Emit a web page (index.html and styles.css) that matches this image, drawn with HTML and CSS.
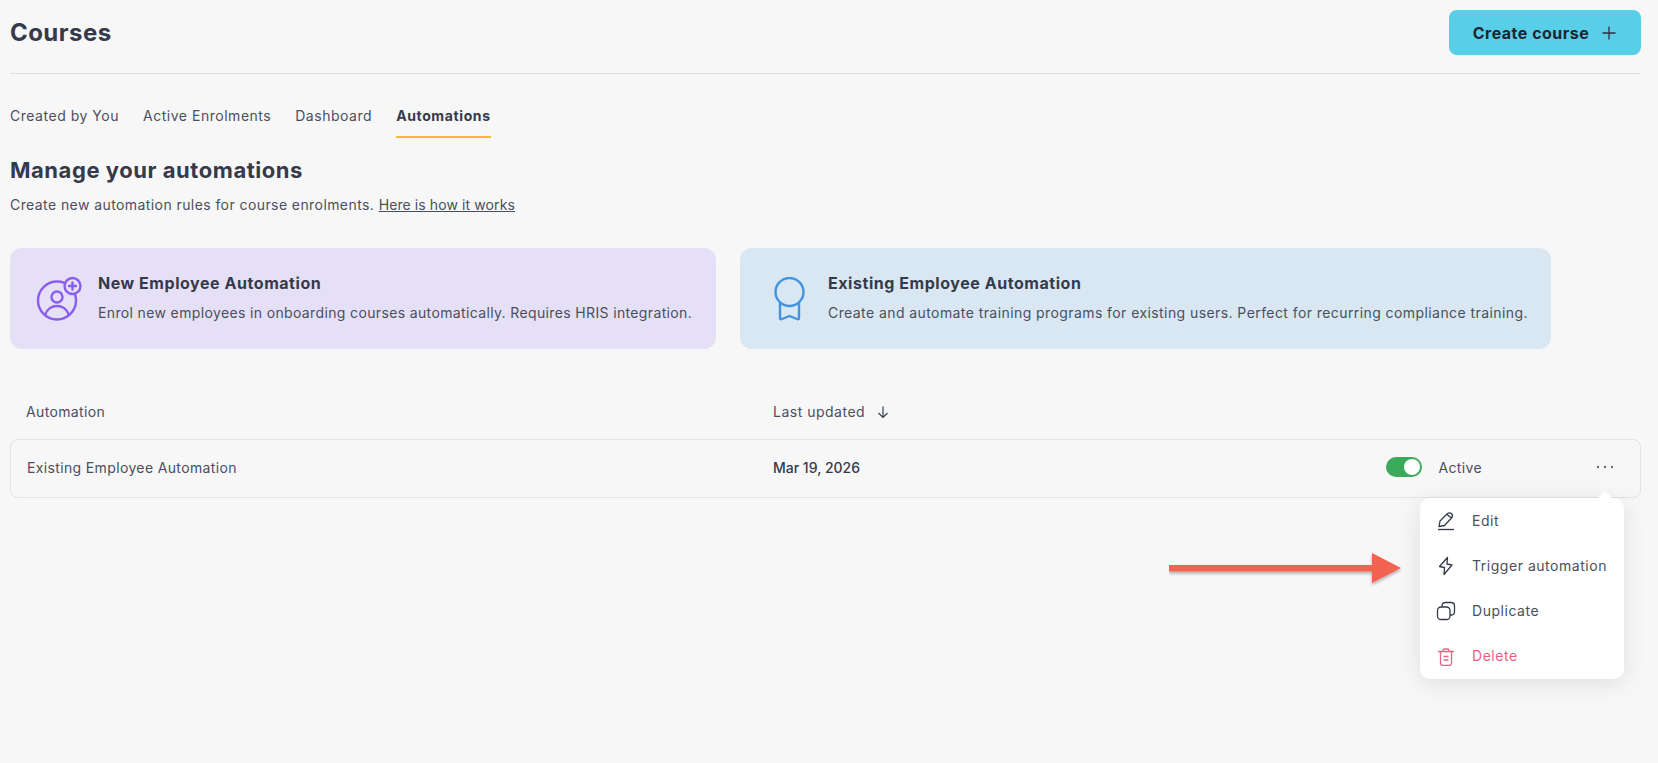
FILE: index.html
```html
<!DOCTYPE html>
<html>
<head>
  <title>Courses</title>
  <link rel="stylesheet" href="styles.css">
</head>
<body>

<header class="topbar">
  <h1>Courses</h1>
  <button class="create-btn">Create course
    <svg width="16" height="16" viewBox="0 0 16 16"><path d="M8 1.500v13M1.500 8h13" fill="none" stroke="#2b3040" stroke-width="1.300"/></svg>
  </button>
</header>

<nav class="tabs">
  <a class="tab">Created by You</a>
  <a class="tab">Active Enrolments</a>
  <a class="tab">Dashboard</a>
  <a class="tab active">Automations</a>
</nav>

<h2>Manage your automations</h2>
<p class="intro">Create new automation rules for course enrolments. <a class="link">Here is how it works</a></p>

<div class="cards">
  <div class="card card-new">
    <div class="card-icon">
      <svg width="46" height="46" viewBox="0 0 46 46" fill="none" stroke="#8b5cf0" stroke-width="2.400" stroke-linecap="round">
        <circle cx="21" cy="24.500" r="19"/>
        <circle cx="21" cy="21" r="5.500"/>
        <path d="M9 39c2-6 7-9 12-9s10 3 12 9"/>
        <circle cx="36.500" cy="10" r="8" fill="#e5e0f5"/>
        <path d="M36.500 6.500v7M33 10h7"/>
      </svg>
    </div>
    <div>
      <div class="card-title">New Employee Automation</div>
      <div class="card-text">Enrol new employees in onboarding courses automatically. Requires HRIS integration.</div>
    </div>
  </div>
  <div class="card card-existing">
    <div class="card-icon">
      <svg width="31" height="44" viewBox="0 0 31 44" fill="none" stroke="#4394e0" stroke-width="2.400" stroke-linecap="round" stroke-linejoin="round">
        <circle cx="15.500" cy="15" r="14"/>
        <path d="M6 26v15q0 2 2 1l7.500-3 7.500 3q2 1 2-1V26"/>
      </svg>
    </div>
    <div>
      <div class="card-title">Existing Employee Automation</div>
      <div class="card-text">Create and automate training programs for existing users. Perfect for recurring compliance training.</div>
    </div>
  </div>
</div>

<div class="table-head">
  <div>Automation</div>
  <div class="sort">Last updated
    <svg width="14" height="14" viewBox="0 0 14 14"><path d="M7 1.500v11M2.500 8l4.500 4.500L11.500 8" fill="none" stroke="#3a3f50" stroke-width="1.200"/></svg>
  </div>
</div>

<div class="table-row">
  <div>Existing Employee Automation</div>
  <div class="date">Mar 19, 2026</div>
  <div class="status">
    <span class="toggle"><span class="knob"></span></span>
    <span>Active</span>
  </div>
  <div class="dots">
    <svg width="18" height="4" viewBox="0 0 18 4" fill="#6b6f7c"><circle cx="2" cy="2" r="1.200"/><circle cx="9" cy="2" r="1.200"/><circle cx="16" cy="2" r="1.200"/></svg>
  </div>
</div>

<!-- open row menu -->
<div class="menu">
  <div class="menu-item">
    <svg width="20" height="20" viewBox="0 0 20 20" fill="none" stroke="#353a4b" stroke-width="1.300" stroke-linejoin="round"><path d="M3 15.500L4 10l7-7q2.500-2 4.500-.5 2 2 0 4.500l-7 7.500zM11 3.500l4.500 3.500"/><path d="M2 18.500h16"/></svg>
    Edit
  </div>
  <div class="menu-item">
    <svg width="20" height="20" viewBox="0 0 20 20" fill="none" stroke="#353a4b" stroke-width="1.300" stroke-linejoin="round"><path d="M11.500 1.500l-8 9 5 1-.5 7 8-9.500-5-1z"/></svg>
    Trigger automation
  </div>
  <div class="menu-item">
    <svg width="20" height="20" viewBox="0 0 20 20" fill="none" stroke="#353a4b" stroke-width="1.300"><rect x="1.500" y="6" width="12.500" height="12.500" rx="3.500"/><path d="M6 6V5q0-3.500 3.500-3.500H15q3.500 0 3.500 3.500v5.500q0 3.500-3.500 3.500h-1"/></svg>
    Duplicate
  </div>
  <div class="menu-item delete">
    <svg width="20" height="20" viewBox="0 0 20 20" fill="none" stroke="#ee5f86" stroke-width="1.300" stroke-linecap="round"><path d="M2.500 5.500h15M7 5.500V4.500Q7 3 8.500 3h3Q13 3 13 4.500v1M4.500 5.500V17q0 2.500 2.500 2.500h6q2.500 0 2.500-2.500V5.500M8 10.500h4M8 14h4"/></svg>
    Delete
  </div>
</div>

<svg class="arrow" width="240" height="40" viewBox="0 0 240 40">
  <defs><filter id="sh"><feDropShadow dx="0" dy="2" stdDeviation="1.500" flood-color="#000" flood-opacity=".3"/></filter></defs>
  <path d="M0 15h203V3l29 15-29 15V21.500H0z" fill="#f36351" filter="url(#sh)"/>
</svg>

</body>
</html>
```

FILE: styles.css
```css
body {
  margin: 0;
  padding: 0 17px 0 10px;
  height: 763px;
  box-sizing: border-box;
  overflow: hidden;
  background-color: #f7f7f7;
  color: #353a4b;
  font-family: "Inter", "Liberation Sans", sans-serif;
  font-size: 14px;
  letter-spacing: .36px;
}
.topbar {
  display: flex;
  justify-content: space-between;
  height: 74px;
  box-sizing: border-box;
  border-bottom: 1px solid #e0e0e0;
}
h1 {
  margin: 18px 0 0;
  font-size: 24px;
  line-height: 30px;
  font-weight: 700;
  letter-spacing: .45px;
}
.create-btn {
  display: flex;
  align-items: center;
  justify-content: center;
  gap: 12px;
  width: 192px;
  height: 45px;
  margin-top: 10px;
  border: 0;
  border-radius: 8px;
  background-color: #58cee8;
  color: #20242f;
  font-family: inherit;
  font-size: 16px;
  font-weight: 700;
  letter-spacing: .5px;
}
.tabs {
  display: flex;
  gap: 24px;
  margin-top: 30px;
}
.tab {
  height: 32px;
  line-height: 24px;
  color: #4a4f5e;
  letter-spacing: .52px;
}
.tab.active {
  color: #353a4b;
  font-weight: 700;
  letter-spacing: .62px;
  border-bottom: 2px solid #f6b93b;
}
h2 {
  margin: 18px 0 0;
  font-size: 22px;
  line-height: 28px;
  font-weight: 700;
  letter-spacing: .55px;
}
.intro {
  margin: 10px 0 0;
  line-height: 22px;
  color: #4a4f5e;
  letter-spacing: .42px;
}
.link {
  text-decoration: underline;
  letter-spacing: .1px;
}
.cards {
  display: flex;
  gap: 24px;
  margin-top: 32px;
}
.card {
  display: flex;
  align-items: center;
  height: 101px;
  border-radius: 12px;
  padding-bottom: 3px;
  box-sizing: border-box;
}
.card-new {
  width: 706px;
  background-color: #e5e0f5;
}
.card-existing {
  width: 811px;
  background-color: #d8e7f2;
}
.card-existing .card-text {
  letter-spacing: .42px;
}
.card-icon {
  display: flex;
  justify-content: center;
  width: 88px;
  padding-left: 10px;
  box-sizing: border-box;
  padding-top: 4px;
}
.card-title {
  font-size: 16px;
  font-weight: 700;
  line-height: 24px;
  letter-spacing: .55px;
}
.card-text {
  margin-top: 8px;
  line-height: 20px;
  color: #4a4f5e;
}
.table-head {
  display: flex;
  margin-top: 51px;
  padding-left: 16px;
  line-height: 24px;
  color: #4a4f5e;
}
.table-head > div:first-child {
  width: 747px;
}
.sort {
  display: flex;
  align-items: center;
  gap: 11px;
  letter-spacing: .5px;
}
.table-row {
  display: flex;
  align-items: center;
  height: 59px;
  margin-top: 15px;
  padding: 0 0 3px 16px;
  border: 1px solid #e2e2ea;
  border-radius: 8px;
  box-sizing: border-box;
  color: #4a4f5e;
}
.table-row > div:first-child {
  width: 746px;
}
.date {
  color: #353a4b;
  font-weight: 500;
  letter-spacing: 0;
}
.status {
  display: flex;
  align-items: center;
  gap: 16px;
  margin-left: auto;
}
.toggle {
  display: flex;
  justify-content: flex-end;
  align-items: center;
  width: 36px;
  height: 20px;
  padding-right: 2px;
  box-sizing: border-box;
  border-radius: 10px;
  background-color: #3bab5b;
}
.knob {
  width: 16px;
  height: 16px;
  border-radius: 50%;
  background-color: #fff;
}
.dots {
  display: flex;
  margin-left: 114px;
  margin-right: 26px;
}
.menu {
  position: absolute;
  left: 1420px;
  top: 498px;
  width: 204px;
  height: 181px;
  box-sizing: border-box;
  background-color: #fff;
  border-radius: 10px;
  box-shadow: 0 4px 24px rgba(0, 0, 0, .1);
}
.menu::before {
  content: "";
  position: absolute;
  left: 178px;
  top: -7px;
  border-left: 7px solid transparent;
  border-right: 7px solid transparent;
  border-bottom: 7px solid #fff;
}
.menu-item {
  display: flex;
  align-items: center;
  gap: 16px;
  height: 45px;
  padding-left: 16px;
  color: #4a4f5e;
  letter-spacing: .53px;
}
.menu-item.delete {
  color: #ee5f86;
}
.arrow {
  position: absolute;
  left: 1169px;
  top: 550px;
}
```
